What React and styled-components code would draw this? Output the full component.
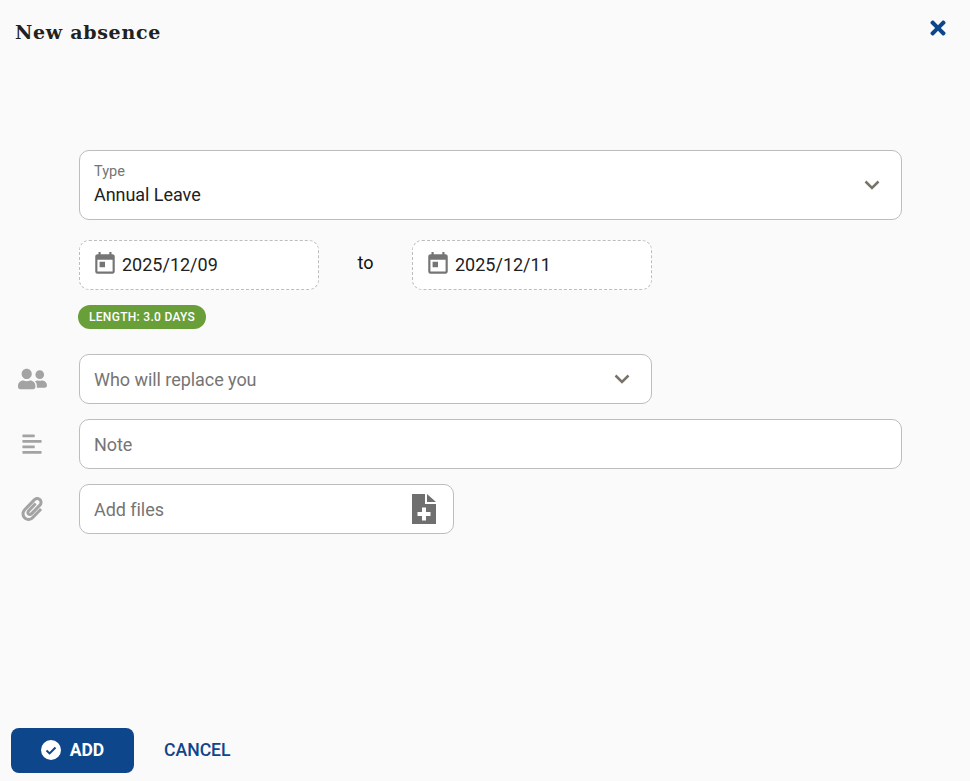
import React from "react"
import styled, { createGlobalStyle } from "styled-components"
import { FaUserFriends, FaAlignLeft, FaPaperclip, FaTimes } from "react-icons/fa"
import { MdToday } from "react-icons/md"

const GlobalStyle = createGlobalStyle`
  html, body {
    margin: 0;
    padding: 0;
    background: #fafafa;
    font-family: Roboto, "Liberation Sans", sans-serif;
  }
  * { box-sizing: border-box; }
`

const Page = styled.div`
  height: 781px;
  display: flex;
  flex-direction: column;
  background: #fafafa;
`
const Header = styled.header`
  height: 150px;
  padding: 20px 21px 0 15px;
  display: flex;
  justify-content: space-between;
  align-items: flex-start;
`
const Title = styled.h1`
  margin: 0;
  font-family: "DejaVu Serif", serif;
  font-size: 19px;
  line-height: 24px;
  font-weight: 700;
  color: #212121;
  letter-spacing: 0.7px;
`
const CloseButton = styled.button`
  border: 0;
  padding: 0;
  background: none;
  color: #0d468a;
  font-size: 22px;
  line-height: 0;
  margin-top: -3px;
  cursor: pointer;
`
const Form = styled.form`
  flex: 1;
  display: flex;
  flex-direction: column;
  padding-left: 79px;
`
const Field = styled.div`
  position: relative;
  width: ${(p) => p.$width}px;
  height: ${(p) => p.$height || 50}px;
  margin-bottom: ${(p) => p.$gap || 0}px;
  padding: 0 ${(p) => p.$right || 20}px 0 14px;
  display: flex;
  align-items: center;
  justify-content: space-between;
  background: #fff;
  border: 1px solid #bdbdbd;
  border-radius: 10px;
  font-size: 18px;
  letter-spacing: -0.05px;
  color: #757575;
`
const SideIcon = styled.span`
  position: absolute;
  left: -63px;
  top: 50%;
  transform: translateY(-50%);
  width: 30px;
  display: flex;
  justify-content: center;
  color: #a3a3a3;
  font-size: ${(p) => p.$size}px;
`
const SelectText = styled.div`
  display: flex;
  flex-direction: column;
  padding-top: 1px;
`
const SmallLabel = styled.span`
  font-size: 14.5px;
  line-height: 16px;
  letter-spacing: 0;
  color: #757575;
`
const SelectValue = styled.span`
  font-size: 18px;
  line-height: 24px;
  margin-top: 3px;
  color: #212121;
`
const DateRow = styled.div`
  display: flex;
  align-items: center;
  margin-bottom: 15px;
`
const DateField = styled.div`
  width: 240px;
  height: 50px;
  padding: 0 0 2px 12px;
  display: flex;
  align-items: center;
  gap: 4px;
  background: #fff;
  border: 1px dashed #bdbdbd;
  border-radius: 10px;
  font-size: 18px;
  color: #212121;
  svg {
    font-size: 26px;
    color: #757575;
  }
`
const To = styled.span`
  width: 93px;
  text-align: center;
  font-size: 18px;
  color: #111;
  margin-top: -5px;
`
const Chip = styled.span`
  align-self: flex-start;
  height: 24px;
  margin: 0 0 25px -1px;
  padding: 0 11px;
  display: flex;
  align-items: center;
  background: #689f38;
  border-radius: 12px;
  color: #fff;
  font-size: 12px;
  font-weight: 500;
  letter-spacing: 0.3px;
`
const Footer = styled.footer`
  height: 53px;
  padding-left: 11px;
  display: flex;
  align-items: flex-start;
`
const AddButton = styled.button`
  width: 123px;
  height: 45px;
  padding: 0 0 2px;
  border: 0;
  border-radius: 8px;
  background: #0d468a;
  color: #fff;
  display: flex;
  align-items: center;
  justify-content: center;
  gap: 9px;
  font-family: inherit;
  font-size: 17.5px;
  font-weight: 700;
`
const CancelButton = styled.button`
  height: 45px;
  margin-left: 30px;
  padding: 0 0 2px;
  border: 0;
  background: none;
  color: #0d468a;
  font-family: inherit;
  font-size: 17.6px;
  font-weight: 500;
`

const Chevron = () => (
  <svg width="18" height="18" viewBox="0 0 18 18" fill="none" stroke="#7a7468" strokeWidth="2.5">
    <path d="M2.5 5.5 9 12l6.5-6.5" />
  </svg>
)

const FileAdd = () => (
  <svg width="24" height="30" viewBox="0 0 24 30">
    <path d="M0 0h13v10h11v20H0z" fill="#6f6f6f" />
    <path d="M15 0l9 8h-9z" fill="#6f6f6f" />
    <path d="M10 13.5h4V18h4.5v4H14v4.5h-4V22H5.5v-4H10z" fill="#fff" />
  </svg>
)

const CheckCircle = () => (
  <svg width="20" height="20" viewBox="0 0 20 20">
    <circle cx="10" cy="10" r="10" fill="#fff" />
    <path d="M5.5 10.5 8.6 13.4 14.5 7.5" fill="none" stroke="#0d468a" strokeWidth="2" />
  </svg>
)

export default function App() {
  return (
    <>
      <GlobalStyle />
      <Page>
        <Header>
          <Title>New absence</Title>
          <CloseButton type="button" aria-label="Close"><FaTimes /></CloseButton>
        </Header>
        <Form>
          <Field $width={823} $height={70} $gap={20}>
            <SelectText>
              <SmallLabel>Type</SmallLabel>
              <SelectValue>Annual Leave</SelectValue>
            </SelectText>
            <Chevron />
          </Field>
          <DateRow>
            <DateField><MdToday />2025/12/09</DateField>
            <To>to</To>
            <DateField><MdToday />2025/12/11</DateField>
          </DateRow>
          <Chip>LENGTH: 3.0 DAYS</Chip>
          <Field $width={573} $gap={15}>
            <SideIcon $size={29}><FaUserFriends /></SideIcon>
            Who will replace you
            <Chevron />
          </Field>
          <Field $width={823} $gap={15}>
            <SideIcon $size={22}><FaAlignLeft /></SideIcon>
            Note
          </Field>
          <Field $width={375} $right={17}>
            <SideIcon $size={24}><FaPaperclip /></SideIcon>
            Add files
            <FileAdd />
          </Field>
        </Form>
        <Footer>
          <AddButton type="button"><CheckCircle />ADD</AddButton>
          <CancelButton type="button">CANCEL</CancelButton>
        </Footer>
      </Page>
    </>
  )
}
